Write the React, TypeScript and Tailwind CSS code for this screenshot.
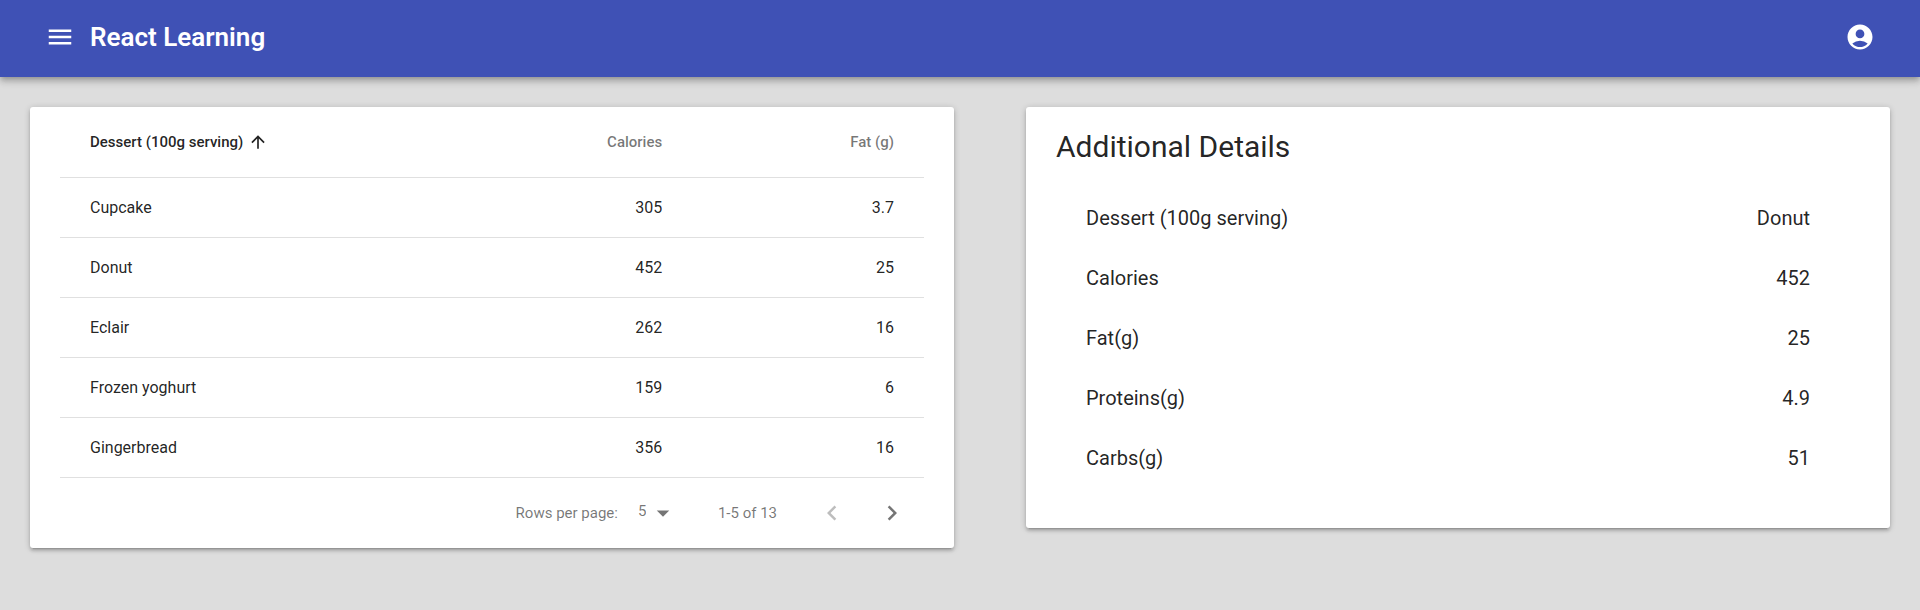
import React, { useState } from "react";
import { MdAccountCircle, MdArrowDropDown, MdArrowUpward, MdChevronLeft, MdChevronRight, MdMenu } from "react-icons/md";

type Dessert = { name: string; calories: number; fat: number };

const desserts: Dessert[] = [
  { name: "Cupcake", calories: 305, fat: 3.7 },
  { name: "Donut", calories: 452, fat: 25 },
  { name: "Eclair", calories: 262, fat: 16 },
  { name: "Frozen yoghurt", calories: 159, fat: 6 },
  { name: "Gingerbread", calories: 356, fat: 16 },
];

const details: [string, string][] = [
  ["Dessert (100g serving)", "Donut"],
  ["Calories", "452"],
  ["Fat(g)", "25"],
  ["Proteins(g)", "4.9"],
  ["Carbs(g)", "51"],
];

const cardClass =
  "rounded-[3px] bg-white shadow-[0_1px_6px_0_rgba(0,0,0,0.2),0_3px_3px_0_rgba(0,0,0,0.14),0_4px_1px_-3px_rgba(0,0,0,0.12)]";

const cellClass = "border-b border-[#e0e0e0]";

function TopBar() {
  return (
    <header className="flex items-center bg-[#3f51b5] px-[30px] pt-[7px] pb-[10px] text-white shadow-[0_2px_5px_-1px_rgba(0,0,0,0.2),0_5px_6px_0_rgba(0,0,0,0.14),0_1px_12px_0_rgba(0,0,0,0.12)]">
      <button type="button" aria-label="Menu" className="flex size-[60px] items-center justify-center">
        <MdMenu className="size-[30px]" />
      </button>
      <h1 className="grow text-[26px] leading-[30px] font-semibold">React Learning</h1>
      <button type="button" aria-label="Account" className="flex size-[60px] items-center justify-center">
        <MdAccountCircle className="size-[30px]" />
      </button>
    </header>
  );
}

function Pagination() {
  const [rows, setRows] = useState("5");
  return (
    <div className="flex h-[70px] items-center justify-end pr-[2px] text-[15px] text-black/54">
      <label htmlFor="rows-per-page">Rows per page:</label>
      <div className="mr-10 ml-[10px] grid items-center">
        <select
          id="rows-per-page"
          value={rows}
          onChange={(e) => setRows(e.target.value)}
          className="col-start-1 row-start-1 w-[50px] appearance-none bg-transparent pr-8 pb-1 pl-[10px]"
        >
          <option>5</option>
          <option>10</option>
          <option>25</option>
        </select>
        <MdArrowDropDown className="pointer-events-none col-start-1 row-start-1 size-[30px] justify-self-end" />
      </div>
      <span className="mr-[25px]">1-5 of 13</span>
      <button type="button" disabled aria-label="Previous page" className="flex size-[60px] items-center justify-center text-black/26">
        <MdChevronLeft className="size-[30px]" />
      </button>
      <button type="button" aria-label="Next page" className="flex size-[60px] items-center justify-center">
        <MdChevronRight className="size-[30px]" />
      </button>
    </div>
  );
}

function DessertTable() {
  return (
    <section className={`${cardClass} px-[30px]`}>
      <table className="w-full table-fixed border-separate border-spacing-0 text-[16px] text-black/87">
        <colgroup>
          <col />
          <col className="w-[28%]" />
          <col className="w-[22.2%]" />
        </colgroup>
        <thead>
          <tr className="h-[71px] text-[15px] text-black/54">
            <th scope="col" aria-sort="ascending" className={`${cellClass} pl-[30px] text-left font-medium`}>
              <button type="button" className="flex items-center gap-[5px] text-black/87">
                Dessert (100g serving)
                <MdArrowUpward className="size-5" />
              </button>
            </th>
            <th scope="col" className={`${cellClass} pr-[70px] text-right font-medium`}>Calories</th>
            <th scope="col" className={`${cellClass} pr-[30px] text-right font-medium`}>Fat (g)</th>
          </tr>
        </thead>
        <tbody>
          {desserts.map((d) => (
            <tr key={d.name} className="h-[60px]">
              <td className={`${cellClass} pl-[30px]`}>{d.name}</td>
              <td className={`${cellClass} pr-[70px] text-right`}>{d.calories}</td>
              <td className={`${cellClass} pr-[30px] text-right`}>{d.fat}</td>
            </tr>
          ))}
        </tbody>
      </table>
      <Pagination />
    </section>
  );
}

function DetailsCard() {
  return (
    <section className={`${cardClass} px-[30px] pt-5 pb-10 text-black/87`}>
      <h2 className="mb-[21px] text-[30px] leading-[40px]">Additional Details</h2>
      <dl className="pr-[50px] pl-[30px] text-[20px]">
        {details.map(([label, value]) => (
          <div key={label} className="flex h-[60px] items-center justify-between">
            <dt>{label}</dt>
            <dd>{value}</dd>
          </div>
        ))}
      </dl>
    </section>
  );
}

export default function App() {
  return (
    <div className="min-h-screen bg-[#dddddd] font-['Roboto',sans-serif]">
      <TopBar />
      <main className="grid grid-cols-[77fr_72fr] items-start gap-[72px] p-[30px]">
        <DessertTable />
        <DetailsCard />
      </main>
    </div>
  );
}
